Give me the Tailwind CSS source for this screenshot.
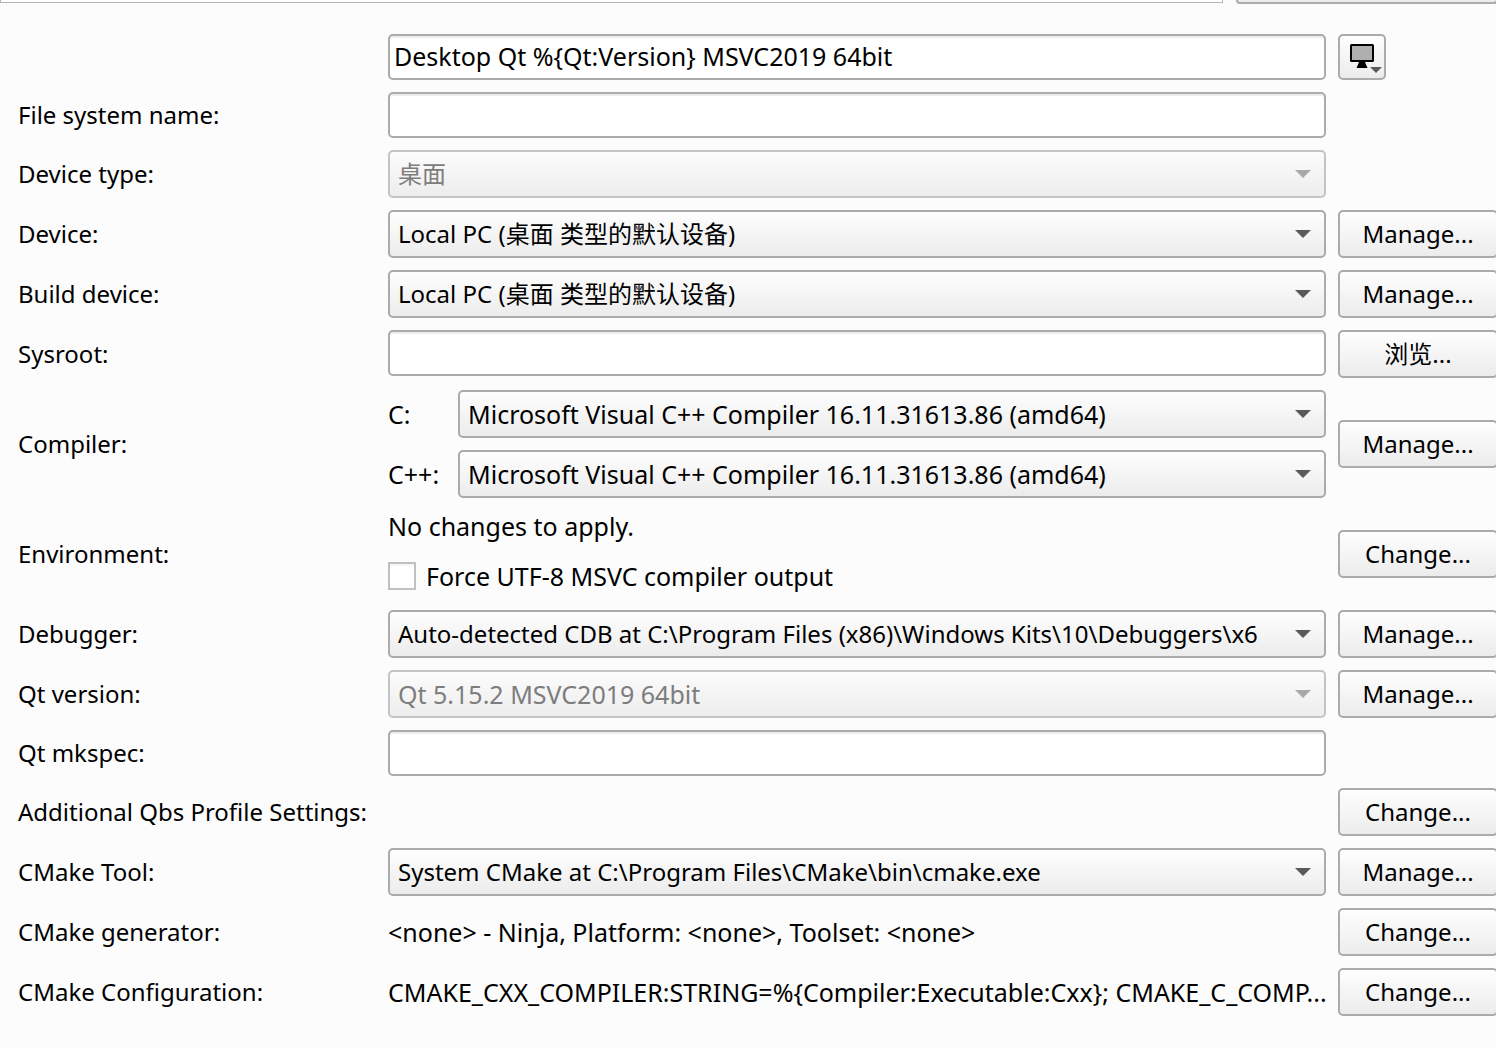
<!DOCTYPE html>
<html lang="zh-CN">
<head>
<meta charset="utf-8">
<title>Kits</title>
<script src="https://cdn.jsdelivr.net/npm/@tailwindcss/browser@4"></script>
</head>
<body class="min-h-screen overflow-x-hidden bg-[#fcfcfc] font-['Noto_Sans','Noto_Sans_CJK_SC',sans-serif] text-[24px] leading-[32px] text-black">
<header class="flex h-1 gap-[13px]">
  <div class="h-[3px] min-w-0 flex-1 border-x border-b border-[#b4b4b4] bg-white"></div>
  <div class="-mr-[2px] h-1 w-[262px] rounded-b border-2 border-t-0 border-[#ababab] bg-[#ededed]"></div>
</header>
<form class="-mr-[2px] grid grid-cols-[358px_minmax(0,1fr)_160px] items-center gap-3 pt-[30px] pb-8 pl-[18px]">
  <input type="text" aria-label="Name" value="Desktop Qt %{Qt:Version} MSVC2019 64bit" class="col-start-2 h-[46px] w-full rounded-[5px] border-2 border-[#ababab] bg-white px-1 pb-[2px] text-[25px] shadow-[inset_0_2px_0_#ededed]">
  <button type="button" aria-label="Icon" class="relative h-[46px] w-12 rounded-[5px] border-2 border-[#ababab] bg-linear-to-b from-[#fefefe] to-[#ececec]">
    <svg class="absolute inset-0 h-[42px] w-11" viewBox="0 0 44 42"><rect x="11" y="9" width="22" height="16" rx="0.5" fill="#afafaf" stroke="#000" stroke-width="2"/><path d="M19.500 25h5l3 7H16.500z"/><path d="M30 31h12l-6 6z" fill="#5a5a5a"/></svg>
  </button>

  <label for="fsname">File system name:</label>
  <input id="fsname" type="text" class="h-[46px] w-full rounded-[5px] border-2 border-[#ababab] bg-white px-1 shadow-[inset_0_2px_0_#ededed]">
  <span></span>

  <label for="devtype">Device type:</label>
  <div class="relative">
    <select id="devtype" disabled class="block h-12 w-full appearance-none rounded-[5px] border-2 border-[#c4c4c4] bg-linear-to-b from-[#fcfcfc] to-[#ededed] pr-[42px] pl-2 text-[#7d7d7d] opacity-100"><option>桌面</option></select>
    <svg class="pointer-events-none absolute top-5 right-[15px] h-2 w-4" viewBox="0 0 16 8"><path d="M0 0h16L8 8z" fill="#a9a9a9"/></svg>
  </div>
  <span></span>

  <label for="device">Device:</label>
  <div class="relative">
    <select id="device" class="block h-12 w-full appearance-none rounded-[5px] border-2 border-[#ababab] bg-linear-to-b from-[#fefefe] to-[#ececec] pr-[42px] pl-2"><option>Local PC (桌面 类型的默认设备)</option></select>
    <svg class="pointer-events-none absolute top-5 right-[15px] h-2 w-4" viewBox="0 0 16 8"><path d="M0 0h16L8 8z" fill="#5a5a5a"/></svg>
  </div>
  <button type="button" class="h-12 rounded-[5px] border-2 border-[#ababab] bg-linear-to-b from-[#fefefe] to-[#ececec]">Manage...</button>

  <label for="build">Build device:</label>
  <div class="relative">
    <select id="build" class="block h-12 w-full appearance-none rounded-[5px] border-2 border-[#ababab] bg-linear-to-b from-[#fefefe] to-[#ececec] pr-[42px] pl-2"><option>Local PC (桌面 类型的默认设备)</option></select>
    <svg class="pointer-events-none absolute top-5 right-[15px] h-2 w-4" viewBox="0 0 16 8"><path d="M0 0h16L8 8z" fill="#5a5a5a"/></svg>
  </div>
  <button type="button" class="h-12 rounded-[5px] border-2 border-[#ababab] bg-linear-to-b from-[#fefefe] to-[#ececec]">Manage...</button>

  <label for="sysroot">Sysroot:</label>
  <input id="sysroot" type="text" class="h-[46px] w-full self-start rounded-[5px] border-2 border-[#ababab] bg-white px-1 shadow-[inset_0_2px_0_#ededed]">
  <button type="button" class="h-12 rounded-[5px] border-2 border-[#ababab] bg-linear-to-b from-[#fefefe] to-[#ececec]">浏览...</button>

  <span>Compiler:</span>
  <div class="grid grid-cols-[58px_minmax(0,1fr)] items-center gap-3 text-[25px]">
    <label for="cc">C:</label>
    <div class="relative">
      <select id="cc" class="block h-12 w-full appearance-none rounded-[5px] border-2 border-[#ababab] bg-linear-to-b from-[#fefefe] to-[#ececec] pr-[42px] pl-2"><option>Microsoft Visual C++ Compiler 16.11.31613.86 (amd64)</option></select>
      <svg class="pointer-events-none absolute top-5 right-[15px] h-2 w-4" viewBox="0 0 16 8"><path d="M0 0h16L8 8z" fill="#5a5a5a"/></svg>
    </div>
    <label for="cxx">C++:</label>
    <div class="relative">
      <select id="cxx" class="block h-12 w-full appearance-none rounded-[5px] border-2 border-[#ababab] bg-linear-to-b from-[#fefefe] to-[#ececec] pr-[42px] pl-2"><option>Microsoft Visual C++ Compiler 16.11.31613.86 (amd64)</option></select>
      <svg class="pointer-events-none absolute top-5 right-[15px] h-2 w-4" viewBox="0 0 16 8"><path d="M0 0h16L8 8z" fill="#5a5a5a"/></svg>
    </div>
  </div>
  <button type="button" class="h-12 rounded-[5px] border-2 border-[#ababab] bg-linear-to-b from-[#fefefe] to-[#ececec]">Manage...</button>

  <span>Environment:</span>
  <div class="flex h-[88px] flex-col gap-[18px] text-[25px]">
    <p>No changes to apply.</p>
    <label class="flex items-center gap-[10px]"><input type="checkbox" class="size-7 appearance-none border-2 border-[#c0c0c0] bg-white shadow-[inset_0_2px_0_#f6f6f6]">Force UTF-8 MSVC compiler output</label>
  </div>
  <button type="button" class="h-12 rounded-[5px] border-2 border-[#ababab] bg-linear-to-b from-[#fefefe] to-[#ececec]">Change...</button>

  <label for="debugger">Debugger:</label>
  <div class="relative">
    <select id="debugger" class="block h-12 w-full appearance-none overflow-hidden rounded-[5px] border-2 border-[#ababab] bg-linear-to-b from-[#fefefe] to-[#ececec] pr-[42px] pl-2"><option>Auto-detected CDB at C:\Program Files (x86)\Windows Kits\10\Debuggers\x6</option></select>
    <svg class="pointer-events-none absolute top-5 right-[15px] h-2 w-4" viewBox="0 0 16 8"><path d="M0 0h16L8 8z" fill="#5a5a5a"/></svg>
  </div>
  <button type="button" class="h-12 rounded-[5px] border-2 border-[#ababab] bg-linear-to-b from-[#fefefe] to-[#ececec]">Manage...</button>

  <label for="qt">Qt version:</label>
  <div class="relative">
    <select id="qt" disabled class="block h-12 w-full appearance-none rounded-[5px] border-2 border-[#c4c4c4] bg-linear-to-b from-[#fcfcfc] to-[#ededed] pr-[42px] pl-2 text-[25px] text-[#7d7d7d] opacity-100"><option>Qt 5.15.2 MSVC2019 64bit</option></select>
    <svg class="pointer-events-none absolute top-5 right-[15px] h-2 w-4" viewBox="0 0 16 8"><path d="M0 0h16L8 8z" fill="#a9a9a9"/></svg>
  </div>
  <button type="button" class="h-12 rounded-[5px] border-2 border-[#ababab] bg-linear-to-b from-[#fefefe] to-[#ececec]">Manage...</button>

  <label for="mkspec">Qt mkspec:</label>
  <input id="mkspec" type="text" class="h-[46px] w-full rounded-[5px] border-2 border-[#ababab] bg-white px-1 shadow-[inset_0_2px_0_#ededed]">
  <span></span>

  <span class="whitespace-nowrap">Additional Qbs Profile Settings:</span>
  <span></span>
  <button type="button" class="h-12 rounded-[5px] border-2 border-[#ababab] bg-linear-to-b from-[#fefefe] to-[#ececec]">Change...</button>

  <label for="cmake">CMake Tool:</label>
  <div class="relative">
    <select id="cmake" class="block h-12 w-full appearance-none rounded-[5px] border-2 border-[#ababab] bg-linear-to-b from-[#fefefe] to-[#ececec] pr-[42px] pl-2"><option>System CMake at C:\Program Files\CMake\bin\cmake.exe</option></select>
    <svg class="pointer-events-none absolute top-5 right-[15px] h-2 w-4" viewBox="0 0 16 8"><path d="M0 0h16L8 8z" fill="#5a5a5a"/></svg>
  </div>
  <button type="button" class="h-12 rounded-[5px] border-2 border-[#ababab] bg-linear-to-b from-[#fefefe] to-[#ececec]">Manage...</button>

  <span>CMake generator:</span>
  <span class="text-[25px]">&lt;none&gt; - Ninja, Platform: &lt;none&gt;, Toolset: &lt;none&gt;</span>
  <button type="button" class="h-12 rounded-[5px] border-2 border-[#ababab] bg-linear-to-b from-[#fefefe] to-[#ececec]">Change...</button>

  <span>CMake Configuration:</span>
  <span class="text-[25px] whitespace-nowrap">CMAKE_CXX_COMPILER:STRING=%{Compiler:Executable:Cxx}; CMAKE_C_COMP...</span>
  <button type="button" class="h-12 rounded-[5px] border-2 border-[#ababab] bg-linear-to-b from-[#fefefe] to-[#ececec]">Change...</button>
</form>
</body>
</html>
